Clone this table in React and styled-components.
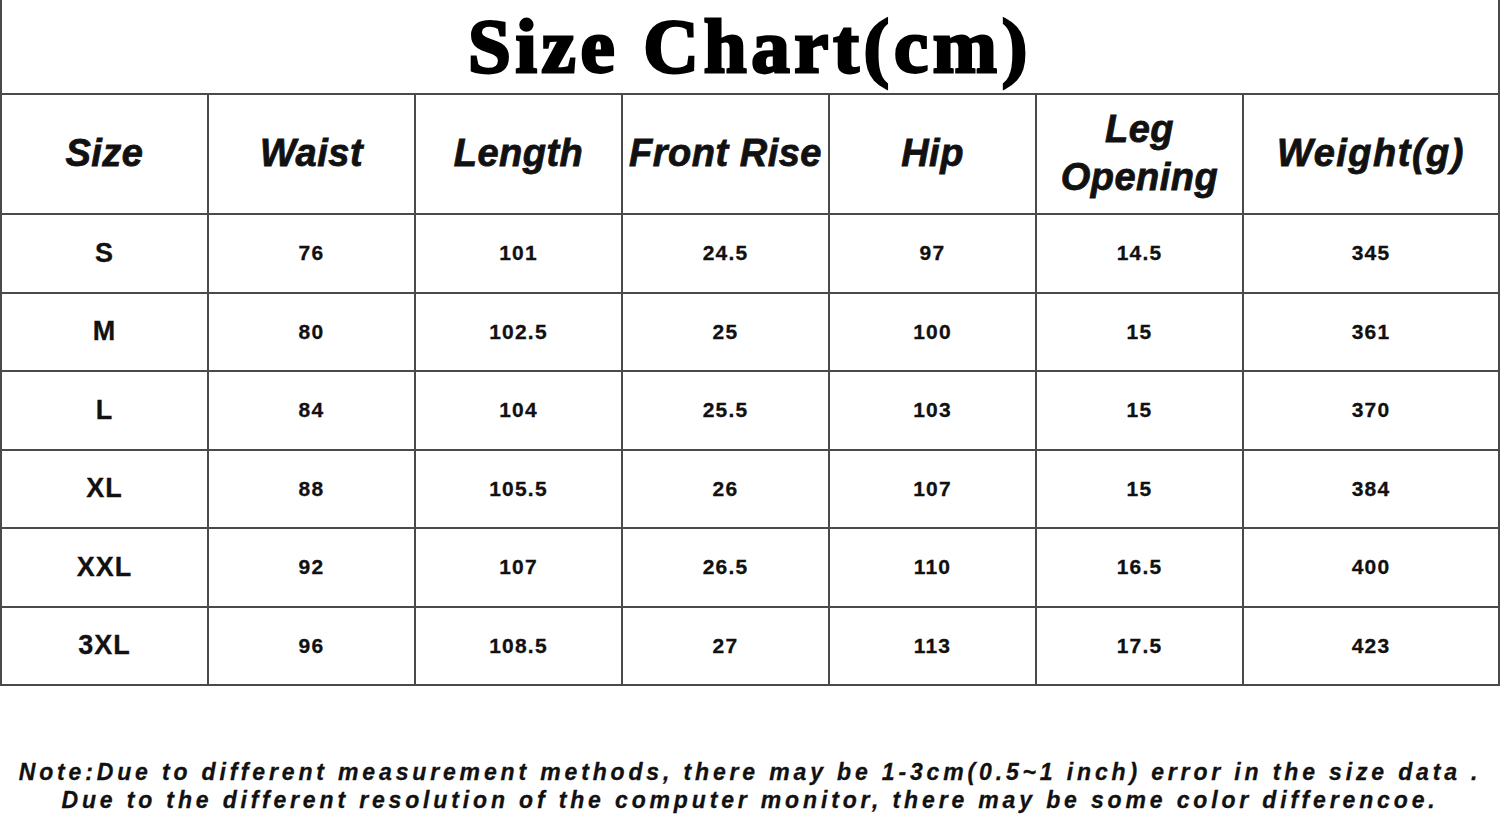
import React from "react";
import styled, { createGlobalStyle } from "styled-components";

const Global = createGlobalStyle`
  html, body { margin: 0; padding: 0; background: #fff; }
  body { font-family: "Liberation Sans", Arial, sans-serif; color: #111; }
`;

const LINE = "#4a4a4a";

const Page = styled.div`
  width: 1500px;
  height: 816px;
  background: #fff;
  overflow: hidden;
`;

const Sheet = styled.div`
  box-sizing: border-box;
  width: 1500px;
  border-left: 2px solid ${LINE};
  border-right: 2px solid ${LINE};
`;

const Title = styled.h1`
  box-sizing: border-box;
  margin: 0;
  height: 95px;
  border-bottom: 2px solid ${LINE};
  display: flex;
  align-items: center;
  justify-content: center;
  font-family: "Liberation Serif", "Times New Roman", serif;
  font-weight: 700;
  font-size: 77px;
  letter-spacing: 4.7px;
  color: #000;
  -webkit-text-stroke: 2.8px #000;
`;

const Grid = styled.div`
  display: grid;
  grid-template-columns: repeat(6, 207px) 1fr;
  grid-template-rows: 120px repeat(6, 78.5px);
`;

const Cell = styled.div`
  box-sizing: border-box;
  display: flex;
  align-items: center;
  justify-content: center;
  text-align: center;
  border-bottom: 2px solid ${LINE};
  border-right: ${(p) => (p.$last ? "none" : `2px solid ${LINE}`)};
  color: #111;
`;

const HeadCell = styled(Cell)`
  font-weight: 700;
  font-style: italic;
  font-size: 38px;
  line-height: 48px;
  letter-spacing: ${(p) => (p.$wide ? "1.5px" : "0.5px")};
  -webkit-text-stroke: 0.8px #111;
  padding-bottom: 2px;
`;

const DataCell = styled(Cell)`
  font-weight: 700;
  font-size: ${(p) => (p.$size ? "27px" : "21px")};
  letter-spacing: ${(p) => (p.$size ? "1px" : "1.2px")};
  -webkit-text-stroke: 0.3px #111;
`;

const Note = styled.div`
  margin-top: 72px;
  text-align: center;
  font-weight: 700;
  font-style: italic;
  font-size: 23px;
  line-height: 28px;
  letter-spacing: 3.85px;
  color: #111;
  -webkit-text-stroke: 0.3px #111;
`;

const heads = ["Size", "Waist", "Length", "Front Rise", "Hip", ["Leg", "Opening"], "Weight(g)"];

const rows = [
  ["S", "76", "101", "24.5", "97", "14.5", "345"],
  ["M", "80", "102.5", "25", "100", "15", "361"],
  ["L", "84", "104", "25.5", "103", "15", "370"],
  ["XL", "88", "105.5", "26", "107", "15", "384"],
  ["XXL", "92", "107", "26.5", "110", "16.5", "400"],
  ["3XL", "96", "108.5", "27", "113", "17.5", "423"],
];

export default function App() {
  return (
    <Page>
      <Global />
      <Sheet>
        <Title>Size Chart(cm)</Title>
        <Grid>
          {heads.map((h, i) => (
            <HeadCell key={i} $last={i === heads.length - 1} $wide={i === heads.length - 1}>
              {Array.isArray(h) ? (
                <span>
                  {h[0]}
                  <br />
                  {h[1]}
                </span>
              ) : (
                h
              )}
            </HeadCell>
          ))}
          {rows.map((r, ri) =>
            r.map((v, ci) => (
              <DataCell key={`${ri}-${ci}`} $size={ci === 0} $last={ci === r.length - 1}>
                {v}
              </DataCell>
            ))
          )}
        </Grid>
      </Sheet>
      <Note>
        Note:Due to different measurement methods, there may be 1-3cm(0.5~1 inch) error in the size data .
        <br />
        Due to the different resolution of the computer monitor, there may be some color differencoe.
      </Note>
    </Page>
  );
}
